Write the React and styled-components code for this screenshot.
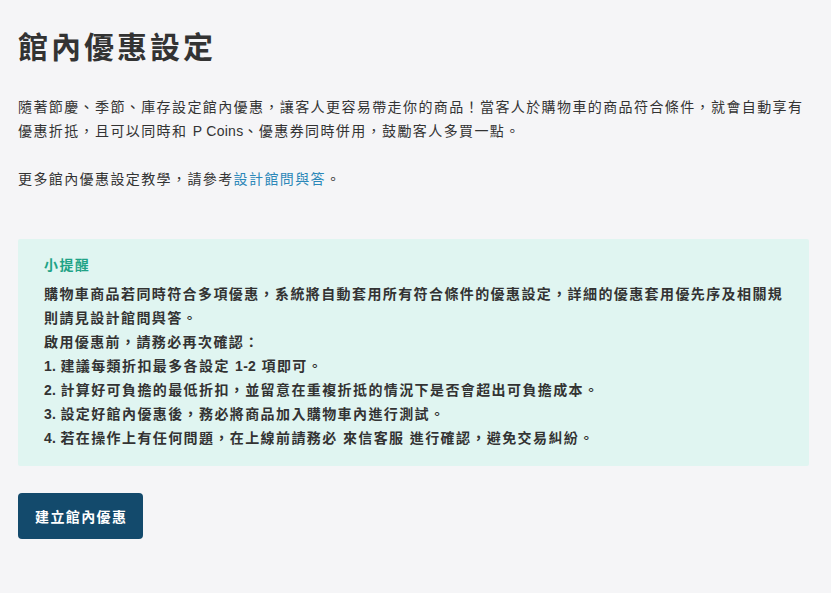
import React from 'react';
import styled, { createGlobalStyle } from 'styled-components';

const GlobalStyle = createGlobalStyle`
  html, body {
    margin: 0;
    padding: 0;
    background: #f5f5f7;
  }
  body {
    font-family: "Liberation Sans", "Noto Sans CJK TC", sans-serif;
    color: #333333;
    -webkit-font-smoothing: antialiased;
  }
`;

const Page = styled.div`
  padding: 25px 18px 40px;
  font-size: 14px;
  line-height: 24px;
  letter-spacing: 0.1em;
`;

const Title = styled.h1`
  margin: 0 0 24px;
  font-size: 30px;
  line-height: 46px;
  font-weight: 700;
  letter-spacing: 0.1em;
  color: #333333;
`;

const Paragraph = styled.p`
  margin: 0 0 24px;
`;

const Link = styled.a`
  color: #2b87b8;
  text-decoration: none;
  cursor: pointer;
`;

/* Latin runs sit tighter than the CJK text around them */
const Latin = styled.span`
  letter-spacing: 0.02em;
`;

const TipBox = styled.div`
  margin: 48px 4px 0 0;
  padding: 14px 22px 16px 26px;
  background: #e0f5f1;
  border-radius: 2px;
  font-weight: 700;
  color: #333333;
`;

const TipTitle = styled.div`
  color: #1fa386;
  margin-bottom: 5px;
`;

const TipLine = styled.div``;

const PrimaryButton = styled.button`
  margin-top: 27px;
  height: 46px;
  padding: 0 16px 0 17px;
  border: none;
  border-radius: 4px;
  background: #134a6c;
  color: #ffffff;
  font-family: inherit;
  font-size: 14px;
  font-weight: 700;
  letter-spacing: 0.1em;
  cursor: pointer;
`;

const steps = [
  ['1. ', '建議每類折扣最多各設定 ', '1-2', ' 項即可。'],
  ['2. ', '計算好可負擔的最低折扣，並留意在重複折抵的情況下是否會超出可負擔成本。'],
  ['3. ', '設定好館內優惠後，務必將商品加入購物車內進行測試。'],
  ['4. ', '若在操作上有任何問題，在上線前請務必 來信客服 進行確認，避免交易糾紛。'],
];

function App() {
  return (
    <Page>
      <GlobalStyle />
      <Title>館內優惠設定</Title>
      <Paragraph>
        隨著節慶、季節、庫存設定館內優惠，讓客人更容易帶走你的商品！當客人於購物車的商品符合條件，就會自動享有優惠折抵，且可以同時和 <Latin>P Coins</Latin>、優惠券同時併用，鼓勵客人多買一點。
      </Paragraph>
      <Paragraph>
        更多館內優惠設定教學，請參考<Link>設計館問與答</Link>。
      </Paragraph>
      <TipBox>
        <TipTitle>小提醒</TipTitle>
        <TipLine>
          購物車商品若同時符合多項優惠，系統將自動套用所有符合條件的優惠設定，詳細的優惠套用優先序及相關規則請見設計館問與答。
        </TipLine>
        <TipLine>啟用優惠前，請務必再次確認：</TipLine>
        {steps.map(([num, text, range, rest], i) => (
          <TipLine key={i}>
            <Latin>{num}</Latin>
            {text}
            {range && <Latin>{range}</Latin>}
            {rest}
          </TipLine>
        ))}
      </TipBox>
      <PrimaryButton>建立館內優惠</PrimaryButton>
    </Page>
  );
}

export default App;
